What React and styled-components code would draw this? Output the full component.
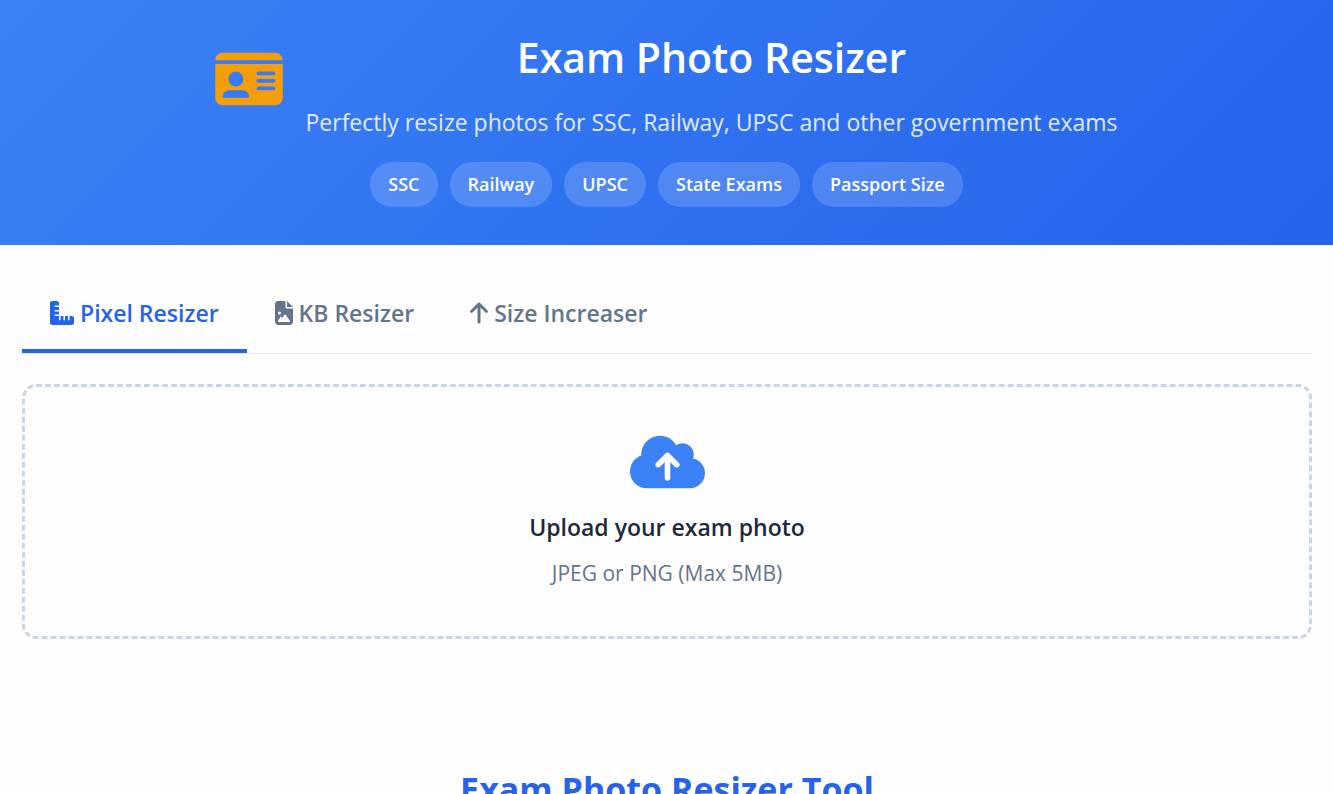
import { useState } from 'react';

import { FaArrowUp, FaCloudArrowUp, FaFileImage, FaIdCard, FaRulerCombined } from 'react-icons/fa6';
import styled, { createGlobalStyle } from 'styled-components';

const exams = ['SSC', 'Railway', 'UPSC', 'State Exams', 'Passport Size'];

const tabs = [
  { id: 'pixel', label: 'Pixel Resizer', Icon: FaRulerCombined, iconWidth: 24 },
  { id: 'kb', label: 'KB Resizer', Icon: FaFileImage, iconWidth: 18 },
  { id: 'increase', label: 'Size Increaser', Icon: FaArrowUp, iconWidth: 18 },
];

const App = () => {
  const [active, setActive] = useState('pixel');

  return (
    <>
      <GlobalStyle />
      <Header>
        <Brand>
          <BrandIcon>
            <FaIdCard />
          </BrandIcon>
          <BrandText>
            <Title>Exam Photo Resizer</Title>
            <Subtitle>Perfectly resize photos for SSC, Railway, UPSC and other government exams</Subtitle>
          </BrandText>
        </Brand>
        <BadgeList>
          {exams.map((exam) => (
            <Badge key={exam}>{exam}</Badge>
          ))}
        </BadgeList>
      </Header>
      <Main>
        <TabList role="tablist">
          {tabs.map(({ id, label, Icon, iconWidth }) => (
            <Tab
              key={id}
              type="button"
              role="tab"
              aria-selected={active === id}
              $active={active === id}
              $iconWidth={iconWidth}
              onClick={() => setActive(id)}
            >
              <Icon />
              {label}
            </Tab>
          ))}
        </TabList>
        <UploadArea htmlFor="photo">
          <FaCloudArrowUp />
          <UploadTitle>Upload your exam photo</UploadTitle>
          <UploadHint>JPEG or PNG (Max 5MB)</UploadHint>
          <FileInput id="photo" type="file" accept="image/jpeg,image/png" />
        </UploadArea>
        <SectionTitle>Exam Photo Resizer Tool</SectionTitle>
      </Main>
    </>
  );
};

const GlobalStyle = createGlobalStyle`
  * {
    box-sizing: border-box;
    margin: 0;
    padding: 0;
  }
  body {
    background: #fefefe;
    color: #1e293b;
    font-family: 'Segoe UI', 'Open Sans', 'Noto Sans', sans-serif;
    font-size: 23px;
  }
`;
const Header = styled.header`
  background: linear-gradient(135deg, #3b82f6, #2563eb);
  color: #ffffff;
  padding: 22px 22px 38px;
`;
const Brand = styled.div`
  display: flex;
  align-items: center;
  justify-content: center;
  gap: 22px;
`;
const BrandIcon = styled.span`
  display: flex;
  color: #f59e0b;
  padding-bottom: 6px;

  svg {
    width: 68px;
    height: 60px;
  }
`;
const BrandText = styled.div`
  text-align: center;
`;
const Title = styled.h1`
  font-size: 41px;
  font-weight: 600;
  line-height: 70px;
`;
const Subtitle = styled.p`
  line-height: 40px;
  margin-top: 10px;
  opacity: 0.85;
`;
const BadgeList = styled.ul`
  display: flex;
  flex-wrap: wrap;
  justify-content: center;
  gap: 12px;
  margin-top: 20px;
  list-style: none;
`;
const Badge = styled.li`
  background: rgba(255, 255, 255, 0.16);
  border-radius: 22px;
  font-size: 18px;
  font-weight: 600;
  line-height: 25px;
  padding: 10px 18px;
`;
const Main = styled.main`
  padding: 34px 21px 34px 22px;
`;
const TabList = styled.div`
  display: flex;
  border-bottom: 1px solid #e2e8f0;
`;
const Tab = styled.button`
  display: flex;
  align-items: center;
  gap: 6px;
  background: none;
  border: none;
  border-bottom: 4px solid ${(props) => (props.$active ? '#2563eb' : 'transparent')};
  color: ${(props) => (props.$active ? '#2563eb' : '#64748b')};
  cursor: pointer;
  font-family: inherit;
  font-size: 23px;
  font-weight: 600;
  line-height: 34px;
  padding: 17px 28px 19px;

  svg {
    width: ${(props) => props.$iconWidth}px;
    height: 24px;
  }
`;
const UploadArea = styled.label`
  display: flex;
  flex-direction: column;
  align-items: center;
  border: 3px dashed #cbd5e1;
  border-radius: 14px;
  cursor: pointer;
  margin-top: 30px;
  padding: 45px;

  svg {
    color: #3b82f6;
    width: 75px;
    height: 60px;
  }
`;
const UploadTitle = styled.span`
  font-weight: 600;
  line-height: 38px;
  margin-top: 16px;
`;
const UploadHint = styled.span`
  color: #64748b;
  font-size: 21px;
  line-height: 35px;
  margin-top: 10px;
`;
const FileInput = styled.input`
  display: none;
`;
const SectionTitle = styled.h2`
  color: #2563eb;
  font-size: 34px;
  font-weight: 700;
  line-height: 56px;
  margin-top: 122px;
  text-align: center;
`;

export default App;
